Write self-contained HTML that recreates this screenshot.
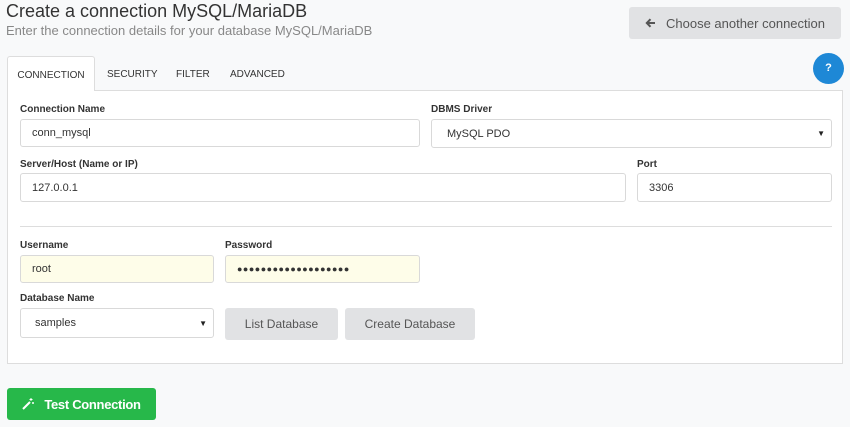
<!DOCTYPE html><html><head><style>
body{margin:0;width:850px;height:427px;background:#f8f9fa;font-family:"Liberation Sans",sans-serif;position:relative;overflow:hidden}
.a{position:absolute}
h1{position:absolute;left:6px;top:1px;margin:0;font-size:18px;font-weight:normal;color:#333}
.sub{left:6px;top:23px;font-size:13px;color:#888}
.tab{top:56px;height:34px;font-size:10px;color:#333;line-height:37px}
.panel{left:7px;top:90px;width:836px;height:274px;background:#fff;border:1px solid #ddd;box-sizing:border-box}
.lbl{font-size:10px;font-weight:bold;color:#333}
.in{background:#fff;border:1px solid #d9d9d9;border-radius:3px;box-sizing:border-box;font-size:11px;color:#333;padding-left:11px;display:flex;align-items:center}
.y{background:#fefde9}
.sel::after{content:"▼";position:absolute;right:6px;font-size:8px;color:#222}
.btn{background:#e1e2e4;border-radius:3px;color:#555;font-size:13px;display:flex;align-items:center;justify-content:center}
</style></head><body>
<h1>Create a connection MySQL/MariaDB</h1>
<div class="a sub">Enter the connection details for your database MySQL/MariaDB</div>
<div class="a btn" style="left:629px;top:7px;width:212px;height:32px;font-size:13px"><svg width="11" height="10" viewBox="0 0 11 10" style="margin-right:10px"><path d="M10 5H2M5.5 1.2L1.8 5l3.7 3.8" stroke="#555" stroke-width="2" fill="none"/></svg>Choose another connection</div>
<div class="a" style="left:813px;top:53px;width:31px;height:31px;border-radius:50%;background:#1e88d6;color:#fff;font-size:11px;font-weight:bold;text-align:center;line-height:31px">?</div>
<div class="a panel"></div>
<div class="a tab" style="left:7px;width:88px;height:35px;background:#fff;border:1px solid #ddd;border-bottom:none;border-radius:3px 3px 0 0;box-sizing:border-box;text-align:center">CONNECTION</div>
<div class="a tab" style="left:107px">SECURITY</div>
<div class="a tab" style="left:176px">FILTER</div>
<div class="a tab" style="left:230px">ADVANCED</div>
<div class="a lbl" style="left:20px;top:104px">Connection Name</div>
<div class="a in" style="left:20px;top:119px;width:400px;height:28px">conn_mysql</div>
<div class="a lbl" style="left:431px;top:104px">DBMS Driver</div>
<div class="a in sel" style="left:431px;top:119px;width:401px;height:29px;padding-left:15px">MySQL PDO</div>
<div class="a lbl" style="left:20px;top:159px">Server/Host (Name or IP)</div>
<div class="a in" style="left:20px;top:173px;width:606px;height:29px">127.0.0.1</div>
<div class="a lbl" style="left:637px;top:159px">Port</div>
<div class="a in" style="left:637px;top:173px;width:195px;height:29px">3306</div>
<div class="a" style="left:20px;top:226px;width:812px;height:1px;background:#ddd"></div>
<div class="a lbl" style="left:20px;top:240px">Username</div>
<div class="a in y" style="left:20px;top:255px;width:194px;height:28px">root</div>
<div class="a lbl" style="left:225px;top:240px">Password</div>
<div class="a in y" style="left:225px;top:255px;width:195px;height:28px;font-size:9px;letter-spacing:0.5px">●●●●●●●●●●●●●●●●●●●</div>
<div class="a lbl" style="left:20px;top:293px">Database Name</div>
<div class="a in sel" style="left:20px;top:308px;width:194px;height:30px;padding-left:14px">samples</div>
<div class="a btn" style="left:225px;top:308px;width:113px;height:32px;font-size:12px">List Database</div>
<div class="a btn" style="left:345px;top:308px;width:130px;height:32px;font-size:12px">Create Database</div>
<div class="a" style="left:7px;top:388px;width:149px;height:32px;background:#27b84a;border-radius:3px;color:#fff;font-size:13px;font-weight:bold;display:flex;align-items:center;justify-content:center;letter-spacing:-0.3px">
<svg width="12" height="12" viewBox="0 0 12 12" style="margin-right:10px"><path d="M1 11 L8 4" stroke="#fff" stroke-width="2"/><path d="M9 0v3M7.5 1.5h3M11 4v2M10 5h2" stroke="#fff" stroke-width="1"/></svg>Test Connection</div>
</body></html>
